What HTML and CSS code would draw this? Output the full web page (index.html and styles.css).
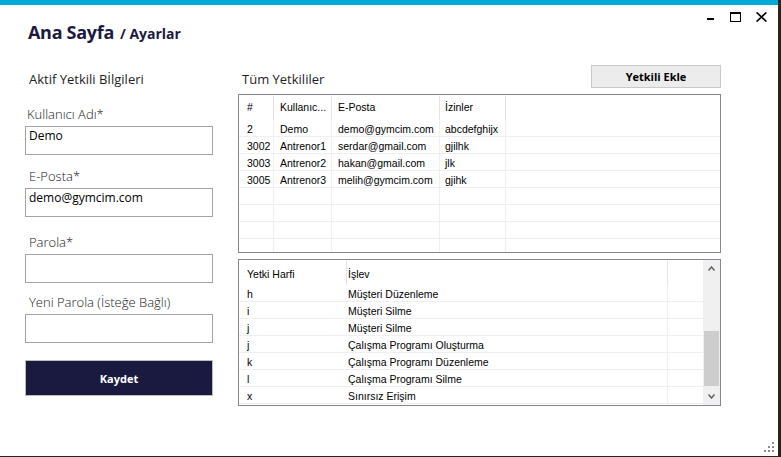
FILE: index.html
```html
<!DOCTYPE html>
<html lang="tr">
<head>
<meta charset="utf-8">
<title>Ana Sayfa / Ayarlar</title>
<link rel="stylesheet" href="styles.css">
</head>
<body>
<div class="window">
  <header class="titlebar">
    <h1 class="title">Ana Sayfa<span class="crumb">/ Ayarlar</span></h1>
    <div class="controls">
      <svg class="ctl ctl-min" width="7" height="10" viewBox="0 0 7 10"><rect x="0" y="6" width="7" height="2" fill="#000"/></svg>
      <svg class="ctl ctl-max" width="12" height="10" viewBox="0 0 12 10"><rect x="0.5" y="1" width="10" height="8.5" fill="none" stroke="#000"/><rect x="0" y="0" width="11" height="2" fill="#000"/></svg>
      <svg class="ctl ctl-close" width="11" height="10" viewBox="0 0 11 10"><path d="M0.6 0.4 L10.4 9.6 M10.4 0.4 L0.6 9.6" stroke="#000" stroke-width="1.6" fill="none"/></svg>
    </div>
  </header>

  <main class="content">
    <section class="profile">
      <h2 class="section-title">Aktif Yetkili Bİlgileri</h2>
      <div class="field field-user">
        <label class="field-label">Kullanıcı Adı*</label>
        <div class="textbox">Demo</div>
      </div>
      <div class="field field-mail">
        <label class="field-label">E-Posta*</label>
        <div class="textbox">demo@gymcim.com</div>
      </div>
      <div class="field field-pass">
        <label class="field-label">Parola*</label>
        <div class="textbox"></div>
      </div>
      <div class="field field-new">
        <label class="field-label">Yeni Parola (İsteğe Bağlı)</label>
        <div class="textbox"></div>
      </div>
      <button class="btn-primary">Kaydet</button>
    </section>

    <section class="users">
      <div class="users-head">
        <h2 class="section-title">Tüm Yetkililer</h2>
        <button class="btn-secondary">Yetkili Ekle</button>
      </div>

      <div class="grid grid-users">
        <div class="row row-head">
          <div class="cell c1">#</div><div class="cell c2">Kullanıc...</div><div class="cell c3">E-Posta</div><div class="cell c4">İzinler</div><div class="cell cf"></div>
        </div>
        <div class="row">
          <div class="cell c1">2</div><div class="cell c2">Demo</div><div class="cell c3">demo@gymcim.com</div><div class="cell c4">abcdefghijx</div><div class="cell cf"></div>
        </div>
        <div class="row">
          <div class="cell c1">3002</div><div class="cell c2">Antrenor1</div><div class="cell c3">serdar@gmail.com</div><div class="cell c4">gjilhk</div><div class="cell cf"></div>
        </div>
        <div class="row">
          <div class="cell c1">3003</div><div class="cell c2">Antrenor2</div><div class="cell c3">hakan@gmail.com</div><div class="cell c4">jlk</div><div class="cell cf"></div>
        </div>
        <div class="row">
          <div class="cell c1">3005</div><div class="cell c2">Antrenor3</div><div class="cell c3">melih@gymcim.com</div><div class="cell c4">gjihk</div><div class="cell cf"></div>
        </div>
        <div class="row"><div class="cell c1"></div><div class="cell c2"></div><div class="cell c3"></div><div class="cell c4"></div><div class="cell cf"></div></div>
        <div class="row"><div class="cell c1"></div><div class="cell c2"></div><div class="cell c3"></div><div class="cell c4"></div><div class="cell cf"></div></div>
        <div class="row"><div class="cell c1"></div><div class="cell c2"></div><div class="cell c3"></div><div class="cell c4"></div><div class="cell cf"></div></div>
        <div class="row"><div class="cell c1"></div><div class="cell c2"></div><div class="cell c3"></div><div class="cell c4"></div><div class="cell cf"></div></div>
      </div>

      <div class="grid grid-perms">
        <div class="perms-body">
          <div class="row row-head">
            <div class="cell p1">Yetki Harfi</div><div class="cell p2">İşlev</div><div class="cell pf"></div>
          </div>
          <div class="row"><div class="cell p1">h</div><div class="cell p2">Müşteri Düzenleme</div><div class="cell pf"></div></div>
          <div class="row"><div class="cell p1">i</div><div class="cell p2">Müşteri Silme</div><div class="cell pf"></div></div>
          <div class="row"><div class="cell p1">j</div><div class="cell p2">Müşteri Silme</div><div class="cell pf"></div></div>
          <div class="row"><div class="cell p1">j</div><div class="cell p2">Çalışma Programı Oluşturma</div><div class="cell pf"></div></div>
          <div class="row"><div class="cell p1">k</div><div class="cell p2">Çalışma Programı Düzenleme</div><div class="cell pf"></div></div>
          <div class="row"><div class="cell p1">l</div><div class="cell p2">Çalışma Programı Silme</div><div class="cell pf"></div></div>
          <div class="row"><div class="cell p1">x</div><div class="cell p2">Sınırsız Erişim</div><div class="cell pf"></div></div>
        </div>
        <div class="scrollbar">
          <div class="sb-btn"><svg width="7" height="5" viewBox="0 0 7 5"><polyline points="0.5,4.5 3.5,1 6.5,4.5" fill="none" stroke="#606060" stroke-width="1.5"/></svg></div>
          <div class="sb-track"><div class="sb-thumb"></div></div>
          <div class="sb-btn"><svg width="7" height="5" viewBox="0 0 7 5"><polyline points="0.5,0.5 3.5,4 6.5,0.5" fill="none" stroke="#606060" stroke-width="1.5"/></svg></div>
        </div>
      </div>
    </section>
  </main>

  <svg class="grip" width="10" height="10" viewBox="0 0 10 10">
    <rect x="8" y="0" width="2" height="2" fill="#8c8c8c"/>
    <rect x="4" y="4" width="2" height="2" fill="#8c8c8c"/>
    <rect x="8" y="4" width="2" height="2" fill="#8c8c8c"/>
    <rect x="0" y="8" width="2" height="2" fill="#8c8c8c"/>
    <rect x="4" y="8" width="2" height="2" fill="#8c8c8c"/>
    <rect x="8" y="8" width="2" height="2" fill="#8c8c8c"/>
  </svg>
</div>
</body>
</html>
```

FILE: styles.css
```css
html, body {
  margin: 0;
  padding: 0;
  background: #2a241e;
}

body {
  width: 781px;
  height: 457px;
  overflow: hidden;
  font-family: "Open Sans", "Noto Sans", sans-serif;
}

.window {
  position: relative;
  width: 778px;
  height: 456px;
  box-sizing: border-box;
  background: #ffffff;
  border-top: 5px solid #00a9d6;
}

/* title bar */
.titlebar {
  display: flex;
  align-items: flex-start;
  height: 60px;
}

.title {
  margin: 0;
  padding: 15px 0 0 28px;
  font-size: 18px;
  line-height: 24px;
  font-weight: 700;
  letter-spacing: -0.3px;
  color: #1b1a41;
}

.crumb {
  margin-left: 6px;
  font-size: 14px;
  font-weight: 700;
  letter-spacing: 0;
}

.controls {
  margin-left: auto;
  margin-right: 11px;
  padding-top: 7px;
  display: flex;
  align-items: flex-start;
}

.ctl { display: block; }
.ctl-max { margin-left: 16px; }
.ctl-close { margin-left: 14px; }

/* content */
.content {
  display: flex;
  gap: 25px;
  padding-left: 25px;
}

.profile {
  width: 188px;
  padding-top: 5px;
  display: flex;
  flex-direction: column;
}

.section-title {
  margin: 0;
  padding-left: 4px;
  font-size: 13px;
  line-height: 18px;
  font-weight: 400;
  color: #1e1e1e;
}

.field-label {
  display: block;
  margin-bottom: 3px;
  padding-left: 4px;
  font-size: 13px;
  line-height: 18px;
  font-weight: 300;
  color: #222;
}

.field-user { margin-top: 17px; }
.field-user .field-label { padding-left: 2px; }
.field-mail { margin-top: 12px; }
.field-pass { margin-top: 16px; }
.field-new { margin-top: 10px; }

.textbox {
  height: 29px;
  box-sizing: border-box;
  border: 1px solid #a3a3a3;
  padding: 1px 3px;
  font-size: 12px;
  line-height: 16px;
  color: #000;
  background: #fff;
}

.btn-primary {
  margin-top: 17px;
  height: 36px;
  width: 188px;
  box-sizing: border-box;
  border: 1px solid #bdbdbd;
  background: #1a1a41;
  color: #fff;
  font-family: "Open Sans", sans-serif;
  font-size: 11px;
  font-weight: 700;
  padding: 0;
}

/* users panel */
.users {
  width: 483px;
  display: flex;
  flex-direction: column;
}

.users-head {
  display: flex;
  justify-content: space-between;
  align-items: flex-end;
  height: 23px;
}

.btn-secondary {
  width: 130px;
  height: 23px;
  box-sizing: border-box;
  border: 1px solid #c9c9c9;
  background: #ececec;
  color: #000;
  font-family: "Open Sans", sans-serif;
  font-size: 11px;
  font-weight: 700;
  padding: 0;
}

.grid {
  box-sizing: border-box;
  border: 1px solid #828790;
  background: #fff;
  overflow: hidden;
  font-family: "Liberation Sans", Arial, sans-serif;
  font-size: 10.5px;
  color: #000;
  margin-top: 6px;
}

.grid-users { height: 159px; }

.row {
  display: flex;
  height: 17px;
  box-sizing: border-box;
  border-bottom: 1px solid #efefef;
}

.cell {
  box-sizing: border-box;
  flex: none;
  min-width: 0;
  line-height: 18px;
  white-space: nowrap;
  overflow: hidden;
  text-align: left;
}

.row-head {
  height: 25px;
  border-bottom: none;
}

.row-head .cell {
  line-height: 16px;
  height: 24px;
  margin-top: 1px;
  padding-top: 3px;
}

/* users grid columns */
.c1 { width: 35px; padding-left: 8px; border-right: 1px solid #efefef; }
.c2 { width: 58px; padding-left: 6px; border-right: 1px solid #efefef; }
.c3 { width: 108px; padding-left: 6px; border-right: 1px solid #efefef; }
.c4 { width: 66px; padding-left: 5px; border-right: 1px solid #efefef; }
.cf { flex: 1; }

.row-head .c1, .row-head .c2, .row-head .c3, .row-head .c4 { border-right-color: #e3e3e3; }

/* permissions grid */
.grid-perms {
  height: 147px;
  display: flex;
}

.perms-body {
  flex: 1;
  min-width: 0;
}

.p1 { width: 108px; padding-left: 8px; }
.p2 { width: 321px; padding-left: 1px; border-right: 1px solid #efefef; }
.pf { flex: 1; }

.grid-perms .row-head .cell { padding-top: 5px; }
.row-head .p1 { border-right: 1px solid #e3e3e3; }
.row-head .p2 { border-right-color: #e3e3e3; }

.scrollbar {
  width: 17px;
  background: #f0f0f0;
  display: flex;
  flex-direction: column;
}

.sb-btn {
  height: 17px;
  display: flex;
  align-items: center;
  justify-content: center;
}

.sb-btn svg { display: block; }

.sb-track {
  flex: 1;
}

.sb-thumb {
  margin: 54px 1px 0 1px;
  height: 55px;
  background: #cdcdcd;
}

.grip {
  position: absolute;
  right: 4px;
  bottom: 4px;
  display: block;
}
```
